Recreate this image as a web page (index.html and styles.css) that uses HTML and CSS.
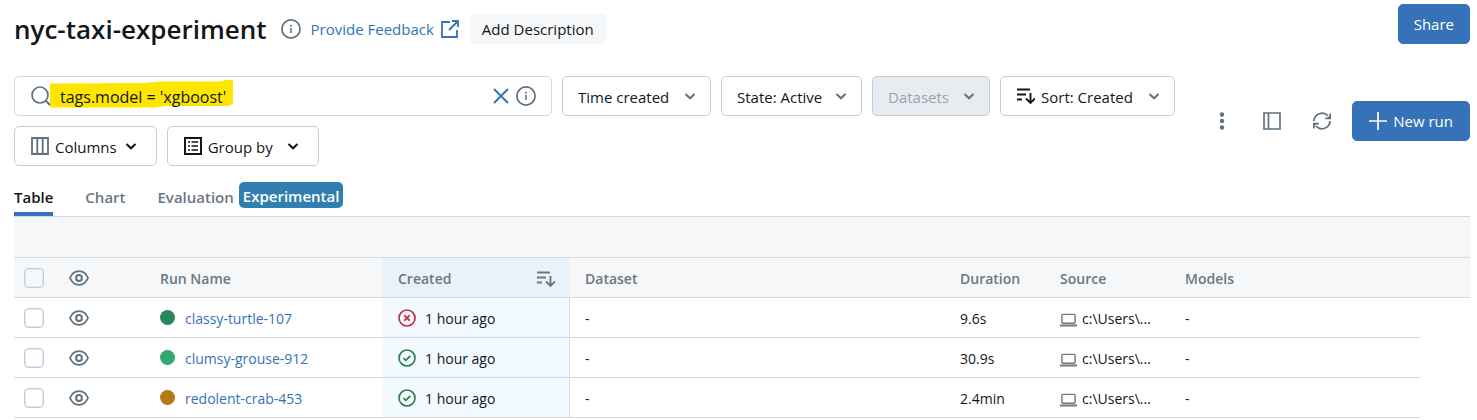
FILE: index.html
```html
<!DOCTYPE html>
<html lang="en">
<head>
<meta charset="utf-8">
<meta name="viewport" content="width=device-width, initial-scale=1">
<title>nyc-taxi-experiment</title>
<link rel="stylesheet" href="styles.css">
</head>
<body>
<svg class="sprite" aria-hidden="true">
  <symbol id="chevron" viewBox="0 0 12 12"><path d="M1.500 4 6 8.300 10.500 4" fill="none" stroke="currentColor" stroke-width="2"/></symbol>
  <symbol id="info" viewBox="0 0 20 20"><circle cx="10" cy="10" r="9.100" fill="none" stroke="currentColor" stroke-width="1.700"/><path d="M10 9v5" stroke="currentColor" stroke-width="1.600"/><circle cx="10" cy="6.700" r="1" fill="currentColor"/></symbol>
  <symbol id="sort" viewBox="0 0 18 18"><path d="M0 2.500h13M0 7.500h9M0 12.500h5M13.500 6v10M9 11.500l4.500 4.500 4.500-4.500" fill="none" stroke="currentColor" stroke-width="1.900"/></symbol>
  <symbol id="eye" viewBox="0 0 20 16"><path d="M1 8C2.800 3.700 6 1.200 10 1.200S17.200 3.700 19 8c-1.800 4.300-5 6.800-9 6.800S2.800 12.300 1 8Z" fill="none" stroke="currentColor" stroke-width="1.800"/><circle cx="10" cy="8" r="2.900" fill="none" stroke="currentColor" stroke-width="2"/></symbol>
  <symbol id="check" viewBox="0 0 18 18"><circle cx="9" cy="9" r="8" fill="none" stroke="currentColor" stroke-width="1.600"/><path d="m5.500 9.200 2.300 2.200 4.500-4.500" fill="none" stroke="currentColor" stroke-width="1.700"/></symbol>
  <symbol id="cross" viewBox="0 0 18 18"><circle cx="9" cy="9" r="8" fill="none" stroke="currentColor" stroke-width="1.700"/><path d="m6.300 6.300 5.400 5.400M11.700 6.300l-5.400 5.400" stroke="currentColor" stroke-width="1.900"/></symbol>
  <symbol id="laptop" viewBox="0 0 18 14"><rect x="2" y="1" width="14" height="9.500" rx="1" fill="none" stroke="currentColor" stroke-width="1.500"/><path d="M0 11.800h18v1.200q0 1-1 1H1q-1 0-1-1Z" fill="currentColor"/></symbol>
</svg>

<header class="header">
  <div class="heading">
    <h1 class="title">nyc-taxi-experiment</h1>
    <svg class="icon icon-info" role="img" aria-label="Experiment details"><use href="#info"/></svg>
    <a class="feedback" href="#feedback">Provide Feedback
      <svg class="icon" viewBox="0 0 18 18" aria-hidden="true"><path d="M9 2H1v15h15V10M11 1h6v6M17 1 8 10" fill="none" stroke="currentColor" stroke-width="1.800"/></svg>
    </a>
    <button class="description" type="button">Add Description</button>
  </div>
  <button class="button primary" type="button">Share</button>
</header>

<section class="toolbar" aria-label="Run filters">
  <div class="filters">
    <div class="search">
      <svg class="highlight" viewBox="0 0 183 28" preserveAspectRatio="none" aria-hidden="true"><path d="M0 3.500 95 3 110 1.500 170 1.500 176 0H183V24L178 26 115 26 105 27.500H0Z"/></svg>
      <svg class="icon search-icon" viewBox="0 0 20 20" aria-hidden="true"><circle cx="9" cy="9" r="8" fill="none" stroke="currentColor" stroke-width="1.700"/><path d="m14.500 14.500 4.500 4.500" stroke="currentColor" stroke-width="1.900"/></svg>
      <input class="search-input" type="text" aria-label="Search runs" value="tags.model = 'xgboost'" spellcheck="false">
      <button class="search-action clear" type="button" aria-label="Clear search"><svg class="icon" viewBox="0 0 18 18" aria-hidden="true"><path d="m2 2 14 14M16 2 2 16" stroke="currentColor" stroke-width="1.900"/></svg></button>
      <button class="search-action" type="button" aria-label="Search help"><svg class="icon icon-info" aria-hidden="true"><use href="#info"/></svg></button>
    </div>
    <div class="dropdown time">
      <select aria-label="Time created"><option>Time created</option></select>
      <svg class="chevron" aria-hidden="true"><use href="#chevron"/></svg>
    </div>
    <div class="dropdown state">
      <select aria-label="State"><option>State: Active</option></select>
      <svg class="chevron" aria-hidden="true"><use href="#chevron"/></svg>
    </div>
    <div class="dropdown datasets">
      <select aria-label="Datasets" disabled><option>Datasets</option></select>
      <svg class="chevron" aria-hidden="true"><use href="#chevron"/></svg>
    </div>
    <div class="dropdown sort">
      <svg class="icon lead" aria-hidden="true"><use href="#sort"/></svg>
      <select aria-label="Sort"><option>Sort: Created</option></select>
      <svg class="chevron" aria-hidden="true"><use href="#chevron"/></svg>
    </div>
    <button class="button menu columns" type="button" aria-haspopup="true">
      <svg class="icon muted" viewBox="0 0 18 18" aria-hidden="true"><path d="M1 1h16v16H1ZM6.300 1v16M11.700 1v16" fill="none" stroke="currentColor" stroke-width="1.800"/></svg>
      <span>Columns</span>
      <svg class="chevron" aria-hidden="true"><use href="#chevron"/></svg>
    </button>
    <button class="button menu group" type="button" aria-haspopup="true">
      <svg class="icon" viewBox="0 0 18 18" aria-hidden="true"><path d="M1 1h16v16H1Z" fill="none" stroke="currentColor" stroke-width="2"/><path d="M4 5h2M4 9h2M4 13h2M7.500 5H14M7.500 9H14M7.500 13H14" stroke="currentColor" stroke-width="1.600"/></svg>
      <span>Group by</span>
      <svg class="chevron" aria-hidden="true"><use href="#chevron"/></svg>
    </button>
  </div>
  <div class="actions">
    <button class="icon-button" type="button" aria-label="More"><svg class="icon" viewBox="0 0 18 18" aria-hidden="true"><g fill="currentColor"><circle cx="9" cy="2.500" r="2.200"/><circle cx="9" cy="9" r="2.200"/><circle cx="9" cy="15.500" r="2.200"/></g></svg></button>
    <button class="icon-button" type="button" aria-label="Toggle side panel"><svg class="icon" viewBox="0 0 18 18" aria-hidden="true"><path d="M1 1h16v16H1ZM5.500 1v16" fill="none" stroke="currentColor" stroke-width="1.700"/></svg></button>
    <button class="icon-button" type="button" aria-label="Refresh"><svg class="icon" viewBox="0 0 18 18" aria-hidden="true"><path d="M1 9A8 8 0 0 1 15 4M17 9A8 8 0 0 1 3 14" fill="none" stroke="currentColor" stroke-width="1.800"/><path d="M18 1.500V7.300H12.200V5.600H14.800L16.300 4V1.500ZM0 16.500V10.700H5.800V12.400H3.200L1.700 14V16.500Z" fill="currentColor"/></svg></button>
    <button class="button primary new-run" type="button"><svg class="icon" viewBox="0 0 18 18" aria-hidden="true"><path d="M9 0v18M0 9h18" stroke="currentColor" stroke-width="1.700"/></svg>New run</button>
  </div>
</section>

<nav class="tabs" aria-label="Views">
  <a class="tab active" href="#table" aria-current="page">Table</a>
  <a class="tab" href="#chart">Chart</a>
  <a class="tab" href="#evaluation">Evaluation <span class="badge">Experimental</span></a>
</nav>

<table class="runs">
  <colgroup><col class="c-check"><col class="c-eye"><col class="c-name"><col class="c-created"><col class="c-dataset"><col class="c-duration"><col class="c-source"><col class="c-models"><col></colgroup>
  <thead>
    <tr><td colspan="9"></td></tr>
    <tr>
      <th><input class="check" type="checkbox" aria-label="Select all runs"></th>
      <th><svg class="eye" role="img" aria-label="Visibility"><use href="#eye"/></svg></th>
      <th>Run Name</th>
      <th class="created"><div class="sorted">Created<svg class="icon" aria-hidden="true"><use href="#sort"/></svg></div></th>
      <th>Dataset</th><th>Duration</th><th>Source</th><th>Models</th><td></td>
    </tr>
  </thead>
  <tbody>
    <tr>
      <td><input class="check" type="checkbox" aria-label="Select classy-turtle-107"></td>
      <td><svg class="eye" role="img" aria-label="Visible"><use href="#eye"/></svg></td>
      <td><div class="run"><span class="dot green"></span><a href="#run-1">classy-turtle-107</a></div></td>
      <td class="created"><div class="status failed"><svg class="icon" role="img" aria-label="Failed"><use href="#cross"/></svg><span>1 hour ago</span></div></td>
      <td>-</td><td>9.6s</td>
      <td><div class="source"><svg class="laptop" aria-hidden="true"><use href="#laptop"/></svg>c:\Users\...</div></td>
      <td>-</td><td class="filler"></td>
    </tr>
    <tr>
      <td><input class="check" type="checkbox" aria-label="Select clumsy-grouse-912"></td>
      <td><svg class="eye" role="img" aria-label="Visible"><use href="#eye"/></svg></td>
      <td><div class="run"><span class="dot mint"></span><a href="#run-2">clumsy-grouse-912</a></div></td>
      <td class="created"><div class="status"><svg class="icon" role="img" aria-label="Finished"><use href="#check"/></svg><span>1 hour ago</span></div></td>
      <td>-</td><td>30.9s</td>
      <td><div class="source"><svg class="laptop" aria-hidden="true"><use href="#laptop"/></svg>c:\Users\...</div></td>
      <td>-</td><td class="filler"></td>
    </tr>
    <tr>
      <td><input class="check" type="checkbox" aria-label="Select redolent-crab-453"></td>
      <td><svg class="eye" role="img" aria-label="Visible"><use href="#eye"/></svg></td>
      <td><div class="run"><span class="dot amber"></span><a href="#run-3">redolent-crab-453</a></div></td>
      <td class="created"><div class="status"><svg class="icon" role="img" aria-label="Finished"><use href="#check"/></svg><span>1 hour ago</span></div></td>
      <td>-</td><td>2.4min</td>
      <td><div class="source"><svg class="laptop" aria-hidden="true"><use href="#laptop"/></svg>c:\Users\...</div></td>
      <td>-</td><td class="filler"></td>
    </tr>
  </tbody>
</table>
</body>
</html>
```
FILE: styles.css
```css
* { box-sizing: border-box; }
:root {
  --ink: #11171c;
  --muted: #5f7281;
  --blue: #3572b7;
  --border: #c0cddb;
  --line: #d1d9e1;
}
body {
  margin: 0;
  padding: 4px 7px 0 14px;
  background: #fff;
  color: var(--ink);
  font: 15px/20px "Open Sans", "Noto Sans", sans-serif;
}
button, input, select { font: inherit; color: inherit; }
button { cursor: pointer; }
a { color: var(--blue); text-decoration: none; }
.sprite { position: absolute; width: 0; height: 0; }
.icon { width: 18px; height: 18px; flex: none; display: block; }
.icon-info { width: 20px; height: 20px; color: var(--muted); }
.chevron { width: 12px; height: 12px; flex: none; color: var(--muted); }

.header { display: flex; align-items: flex-start; justify-content: space-between; }
.heading { display: flex; align-items: center; height: 30px; margin-top: 10px; }
.title { margin: 0 14px 0 0; font-size: 26px; line-height: 30px; font-weight: 600; }
.feedback { display: flex; align-items: center; gap: 7px; margin: 0 11px 0 10px; }
.description { height: 30px; padding: 0 12px; border: 0; border-radius: 4px; background: #f6f7f9; }

.button {
  display: flex;
  align-items: center;
  justify-content: center;
  height: 40px;
  padding: 0 15px;
  border: 1px solid var(--border);
  border-radius: 5px;
  background: #fff;
  white-space: nowrap;
}
.primary { border-color: var(--blue); background: var(--blue); color: #fff; }

.toolbar { display: flex; align-items: center; justify-content: space-between; gap: 10px; margin-top: 32px; }
.filters { display: flex; flex: 1; flex-wrap: wrap; gap: 10px; }
.search {
  position: relative;
  display: flex;
  align-items: center;
  width: 538px;
  height: 40px;
  padding: 0 15px 0 16px;
  border: 1px solid var(--line);
  border-radius: 5px;
}
.highlight { position: absolute; left: 35px; top: 3px; width: 183px; height: 28px; fill: #ffe600; }
.search-icon { position: relative; width: 20px; height: 20px; color: var(--muted); }
.search-input { position: relative; flex: 1; min-width: 0; height: 38px; padding: 2px 9px 0; border: 0; outline: 0; background: none; font-size: 16px; }
.search-action { padding: 0; border: 0; background: none; margin-left: 6px; }
.clear { color: var(--blue); }

.dropdown { display: grid; align-items: center; }
.dropdown > * { grid-area: 1 / 1; }
.dropdown select {
  appearance: none;
  width: 100%;
  height: 40px;
  padding: 1px 15px 0;
  border: 1px solid var(--border);
  border-radius: 5px;
  background: #fff;
  opacity: 1;
}
.dropdown select:disabled { background: #e8ecf0; color: #95a3b3; }
.dropdown .chevron { justify-self: end; margin-right: 15px; pointer-events: none; }
.dropdown .lead { z-index: 1; margin-left: 17px; pointer-events: none; }
.dropdown.sort select { padding-left: 40px; }
.time { width: 149px; }
.state { width: 141px; }
.datasets { width: 118px; }
.sort { width: 175px; }
.menu { padding: 0 19px 0 16px; }
.menu .chevron { color: var(--ink); }
.menu span { padding: 2px 8px 0 6px; }
.group span { padding-right: 14px; }
.muted { color: var(--muted); }

.actions { display: flex; gap: 10px; }
.icon-button { display: grid; place-items: center; width: 40px; height: 40px; padding: 0; border: 0; background: none; color: var(--muted); }
.new-run { gap: 6px; padding: 0 16px; }

.tabs { display: flex; gap: 32px; height: 51px; border-bottom: 1px solid var(--line); font-weight: 600; }
.tab { display: flex; align-items: center; gap: 5px; padding-top: 16px; border-bottom: 4px solid transparent; color: #6b7783; }
.active { color: var(--ink); border-color: var(--blue); }
.badge { margin-bottom: 4px; padding: 4px 4px 2px; border-radius: 5px; background: #2f7fb0; color: #fff; }

.runs { width: 100%; table-layout: fixed; border-collapse: separate; border-spacing: 0; font-size: 14px; }
.c-check { width: 40px; }
.c-eye { width: 91px; }
.c-name { width: 238px; }
.c-created { width: 187px; }
.c-dataset { width: 375px; }
.c-duration { width: 100px; }
.c-source { width: 125px; }
.c-models { width: 250px; }
.runs th, .runs td { height: 40px; padding: 2px 15px 0; border-bottom: 1px solid var(--line); text-align: left; white-space: nowrap; }
.runs tr > :nth-child(-n+2) { padding-top: 0; }
.runs tr > :first-child { padding: 0 10px; }
.runs thead { background: #f5f7f9; color: #6b7783; }
.runs thead tr:first-child td { height: 41px; }
.runs th { font-weight: 600; }
.runs th.created { background: #eaf2f9; }
.runs td.created { background: #f2f9ff; border-right: 1px solid var(--line); }
.runs .filler { border: 0; padding: 0; }
.check { appearance: none; display: block; width: 20px; height: 20px; margin: 0; border: 1px solid var(--border); border-radius: 4px; outline: 1px solid #e0e7ef; outline-offset: -2px; }
.eye { display: block; width: 20px; height: 16px; color: var(--muted); }
.sorted { display: flex; align-items: center; justify-content: space-between; }
.run { display: flex; align-items: center; gap: 10px; }
.dot { width: 15px; height: 15px; margin-bottom: 2px; border-radius: 50%; }
.green { background: #28885c; }
.mint { background: #34a870; }
.amber { background: #b57a16; }
.status { display: flex; align-items: center; gap: 9px; }
.status .icon { margin-bottom: 2px; color: #277c43; }
.failed .icon { color: #c82d4c; }
.source { display: flex; align-items: center; gap: 5px; }
.laptop { width: 17px; height: 14px; margin-top: 2px; color: #777; }
```
